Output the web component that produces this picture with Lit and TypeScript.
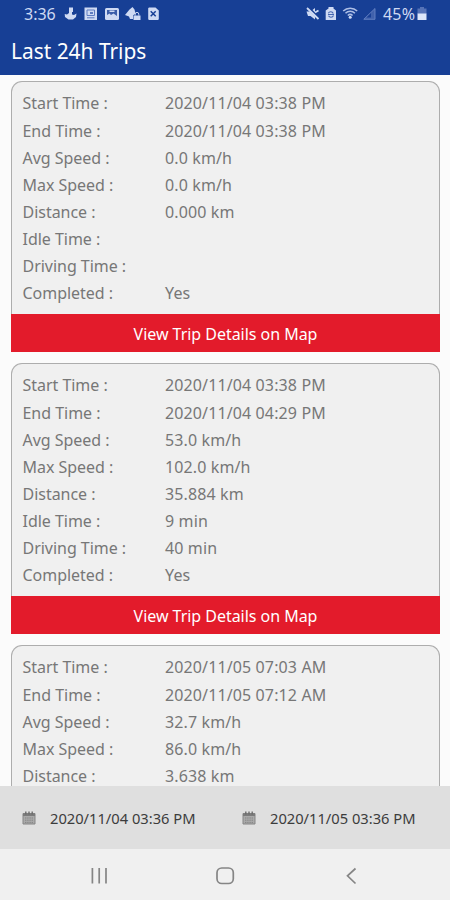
import { LitElement, html, css, svg, nothing } from "lit";
import { customElement, property } from "lit/decorators.js";

interface Trip {
  rows: [string, string][];
  action?: string;
}

const ACTION = "View Trip Details on Map";

const TRIPS: Trip[] = [
  {
    rows: [
      ["Start Time :", "2020/11/04 03:38 PM"],
      ["End Time :", "2020/11/04 03:38 PM"],
      ["Avg Speed :", "0.0 km/h"],
      ["Max Speed :", "0.0 km/h"],
      ["Distance :", "0.000 km"],
      ["Idle Time :", ""],
      ["Driving Time :", ""],
      ["Completed :", "Yes"],
    ],
    action: ACTION,
  },
  {
    rows: [
      ["Start Time :", "2020/11/04 03:38 PM"],
      ["End Time :", "2020/11/04 04:29 PM"],
      ["Avg Speed :", "53.0 km/h"],
      ["Max Speed :", "102.0 km/h"],
      ["Distance :", "35.884 km"],
      ["Idle Time :", "9 min"],
      ["Driving Time :", "40 min"],
      ["Completed :", "Yes"],
    ],
    action: ACTION,
  },
  {
    rows: [
      ["Start Time :", "2020/11/05 07:03 AM"],
      ["End Time :", "2020/11/05 07:12 AM"],
      ["Avg Speed :", "32.7 km/h"],
      ["Max Speed :", "86.0 km/h"],
      ["Distance :", "3.638 km"],
    ],
  },
];

@customElement("trip-card")
class TripCard extends LitElement {
  @property({ attribute: false }) trip!: Trip;

  static styles = css`
    :host { display: block; flex: none; }
    .card {
      box-sizing: border-box;
      height: 271px;
      display: flex;
      flex-direction: column;
    }
    .body {
      box-sizing: border-box;
      flex: 1;
      padding: 8.400px 10.500px 0;
      border: 1px solid #adadad;
      border-bottom: 0;
      border-radius: 11px 11px 0 0;
      background: #f0f0f0;
    }
    .row {
      display: grid;
      grid-template-columns: 142.5px 1fr;
      height: 27.17px;
      line-height: 27.17px;
      font-size: 16px;
      color: #777;
      white-space: pre;
    }
    .label { letter-spacing: -0.03px; }
    .value { letter-spacing: 0.12px; }
    .button {
      height: 38px;
      line-height: 40px;
      background: #e31b2b;
      color: #fff;
      text-align: center;
      font-size: 16px;
      letter-spacing: -0.03px;
    }
  `;

  render() {
    const { rows, action } = this.trip;
    return html`<div class="card">
      <div class="body">
        ${rows.map(([k, v]) => html`<div class="row"><span class="label">${k}</span><span class="value">${v}</span></div>`)}
      </div>
      ${action ? html`<div class="button">${action}</div>` : nothing}
    </div>`;
  }
}

const calendar = svg`<svg width="14" height="14" viewBox="0 0 14 14">
  <path d="M1 2.500h12v10.500H1z" fill="#aaa" stroke="#858585"/>
  <path d="M1 2.500h12v2.500H1z" fill="#7c7c7c"/>
  <path d="M3.800 .5v3M7 .5v3M10.200 .5v3" stroke="#6c6c6c" stroke-width="1.400"/>
  <path d="M3 7h8M3 9.200h8M3 11.400h8" stroke="#858585" stroke-dasharray="1.400 .8"/>
</svg>`;

@customElement("app-root")
class AppRoot extends LitElement {
  static styles = css`
    :host {
      display: flex;
      flex-direction: column;
      width: 450px;
      height: 900px;
      overflow: hidden;
      background: #fbfbfb;
      font-family: "Noto Sans", sans-serif;
    }
    svg { display: block; flex: none; }
    .header { flex: none; height: 75px; background: #173f95; color: #fff; }
    .status {
      display: flex;
      align-items: center;
      height: 28px;
      padding: 0 23px 0 24px;
      color: #cfdaf3;
      font-size: 16px;
    }
    .clock { width: 40px; }
    .indicators { margin-left: auto; display: flex; align-items: center; }
    .percent { width: 34px; letter-spacing: 0.2px; }
    .title { padding-left: 11px; height: 46px; line-height: 46px; font-size: 20.9px; }
    .list {
      flex: 1;
      min-height: 0;
      overflow: hidden;
      display: flex;
      flex-direction: column;
      gap: 11px;
      padding: 6px 10px 0 11px;
    }
    .range {
      flex: none;
      height: 63px;
      display: grid;
      grid-template-columns: 220px 1fr;
      align-items: center;
      padding-left: 22px;
      background: #dfdfdf;
      color: #3c3c3c;
      font-size: 14.7px;
    }
    .date { display: flex; align-items: center; gap: 14px; white-space: nowrap; }
    .nav { flex: none; height: 51px; background: #f0f0f0; }
  `;

  render() {
    return html`
      <div class="header">
        <div class="status">
          <span class="clock">3:36</span>
          <svg width="96" height="16" viewBox="64 6 96 16" fill="#cfdaf3">
            <path d="M69 7.500h4v4.500h-1v2.500l2 .5 2.500-1.500-.5 3.500-3 2.500h-4.500l-3.500-2.500-.3-3 2.300.5 2-1.500z"/>
            <path d="M84.500 7.500h12.500v12.500H84.500z"/>
            <path d="M87 10h7.500v5.500H87zM87 17.800h7.500" fill="none" stroke="#5f7dc1"/>
            <path d="M90 12h3v2h-3z" fill="#5f7dc1"/>
            <path d="M106.500 8h11a1.500 1.500 0 0 1 1.500 1.500v9a1.500 1.500 0 0 1-1.500 1.500h-11a1.500 1.500 0 0 1-1.500-1.500v-9A1.500 1.500 0 0 1 106.500 8z"/>
            <path d="M107 10h10v6l-3.500-2.500-2.500 1.500-1.500-1.500-2.500 1.500z" fill="#3c5ea9"/>
            <path d="M109.500 10.500h5v1.500h-5z"/>
            <path d="M125 15l4.500-5.500 3-2.500 2 2.500 1 4-2.500 2v3.500h-3l-1-2.500z"/>
            <path d="M133.500 15.500h7V20h-7z"/>
            <path d="M135.200 15.500v-1.300a1.800 1.800 0 0 1 3.600 0v1.300" fill="none" stroke="#cfdaf3"/>
            <path d="M149 7.500h6.500l3.300 3v8.700l-.8.800h-9l-.8-.8v-11z"/>
            <path d="M150.700 11.300l5 5M155.700 11.300l-5 5" stroke="#173f95" stroke-width="1.500"/>
          </svg>
          <div class="indicators">
            <svg width="78" height="16" viewBox="305 6 78 16" fill="#cfdaf3">
              <path d="M306.500 11.500h4l4.500-3.500v11.500l-4.500-3.500h-2.500z"/>
              <path d="M308 7.500l11 11" stroke="#173f95" stroke-width="3"/>
              <path d="M307 8l11.500 11M315 12.500l3.500-2" stroke="#cfdaf3" stroke-width="1.800"/>
              <path d="M328.500 7h5v1.500l2.500 2V20h-10.300v-9.500l2.800-2z"/>
              <path d="M328.300 13.200a2.800 2.800 0 0 1 5 .3M333.500 15.500a2.800 2.800 0 0 1-5 .3M328 14.500h6" fill="none" stroke="#4567b1" stroke-width="1.100"/>
              <path d="M343.200 11a10 10 0 0 1 14 0M345.500 13.300a6.500 6.500 0 0 1 9.400 0M347.800 15.500a3.500 3.500 0 0 1 4.800 0" fill="none" stroke="#aebfe6" stroke-width="1.500"/>
              <circle cx="350.200" cy="17.300" r="1.500"/>
              <path d="M363.800 19.300h11.200V8.500z" fill="#4061ac" stroke="#6683c4" stroke-width=".9"/>
              <path d="M366.500 17.500l4.500-4.500v4.500z" fill="#173f95"/>
            </svg>
            <span class="percent">45%</span>
            <svg width="10" height="14" viewBox="0 0 10 14">
              <path d="M3 0h4v1.500h2.500V7H.5V1.500H3z" fill="#5673b7"/>
              <path d="M.5 6.500h9V13h-9z" fill="#dce6fa"/>
            </svg>
          </div>
        </div>
        <div class="title">Last 24h Trips</div>
      </div>
      <div class="list">
        ${TRIPS.map((t) => html`<trip-card .trip=${t}></trip-card>`)}
      </div>
      <div class="range">
        <div class="date">${calendar}<span>2020/11/04 03:36 PM</span></div>
        <div class="date">${calendar}<span>2020/11/05 03:36 PM</span></div>
      </div>
      <div class="nav">
        <svg width="450" height="51" viewBox="0 849 450 51" fill="none" stroke="#858585" stroke-width="1.700">
          <path d="M92.400 868v15.500M99.200 868v15.500M106 868v15.500"/>
          <rect x="217" y="868" width="16.300" height="15.500" rx="4.800"/>
          <path d="M355.500 868.500l-8 7.300 8 7.700"/>
        </svg>
      </div>
    `;
  }
}
